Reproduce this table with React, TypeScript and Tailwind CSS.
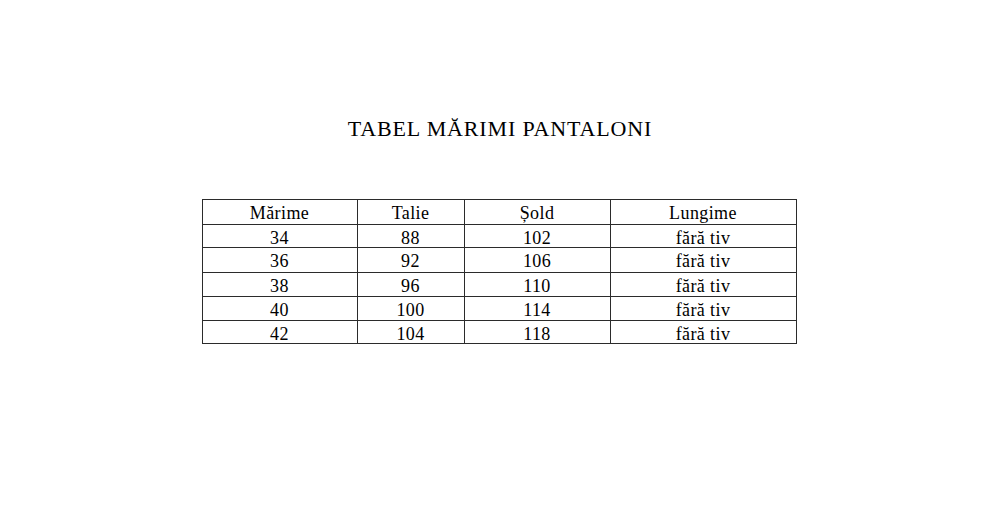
const rows = [
  ["34", "88", "102", "fără tiv"],
  ["36", "92", "106", "fără tiv"],
  ["38", "96", "110", "fără tiv"],
  ["40", "100", "114", "fără tiv"],
  ["42", "104", "118", "fără tiv"],
];

const rowHeights = ["h-[23px]", "h-[25px]", "h-[24px]", "h-[24px]", "h-[22px]"];

export default function App() {
  return (
    <div className="flex h-[519px] w-full flex-col items-center bg-white pt-[117px] text-black [font-family:'Liberation_Serif','Times_New_Roman',serif]">
      <h1 className="text-[22px] leading-[24px] tracking-[0.85px]">TABEL MĂRIMI PANTALONI</h1>

      <table className="mt-[58px] mr-[2px] border-collapse border border-[#2b2b2b] text-center text-[18px] tracking-[0.4px]">
        <thead>
          <tr className="h-[25px]">
            <th className="w-[155px] border border-[#2b2b2b] p-0 pt-[5px] align-top font-normal leading-[17px]">Mărime</th>
            <th className="w-[107px] border border-[#2b2b2b] p-0 pt-[5px] align-top font-normal leading-[17px]">Talie</th>
            <th className="w-[146px] border border-[#2b2b2b] p-0 pt-[5px] align-top font-normal leading-[17px]">Șold</th>
            <th className="w-[186px] border border-[#2b2b2b] p-0 pt-[5px] align-top font-normal leading-[17px]">Lungime</th>
          </tr>
        </thead>
        <tbody>
          {rows.map((row, i) => (
            <tr key={row[0]} className={rowHeights[i]}>
              {row.map((cell, j) => (
                <td key={j} className="border border-[#2b2b2b] p-0 pt-[5px] align-top leading-[17px]">
                  {cell}
                </td>
              ))}
            </tr>
          ))}
        </tbody>
      </table>
    </div>
  );
}
